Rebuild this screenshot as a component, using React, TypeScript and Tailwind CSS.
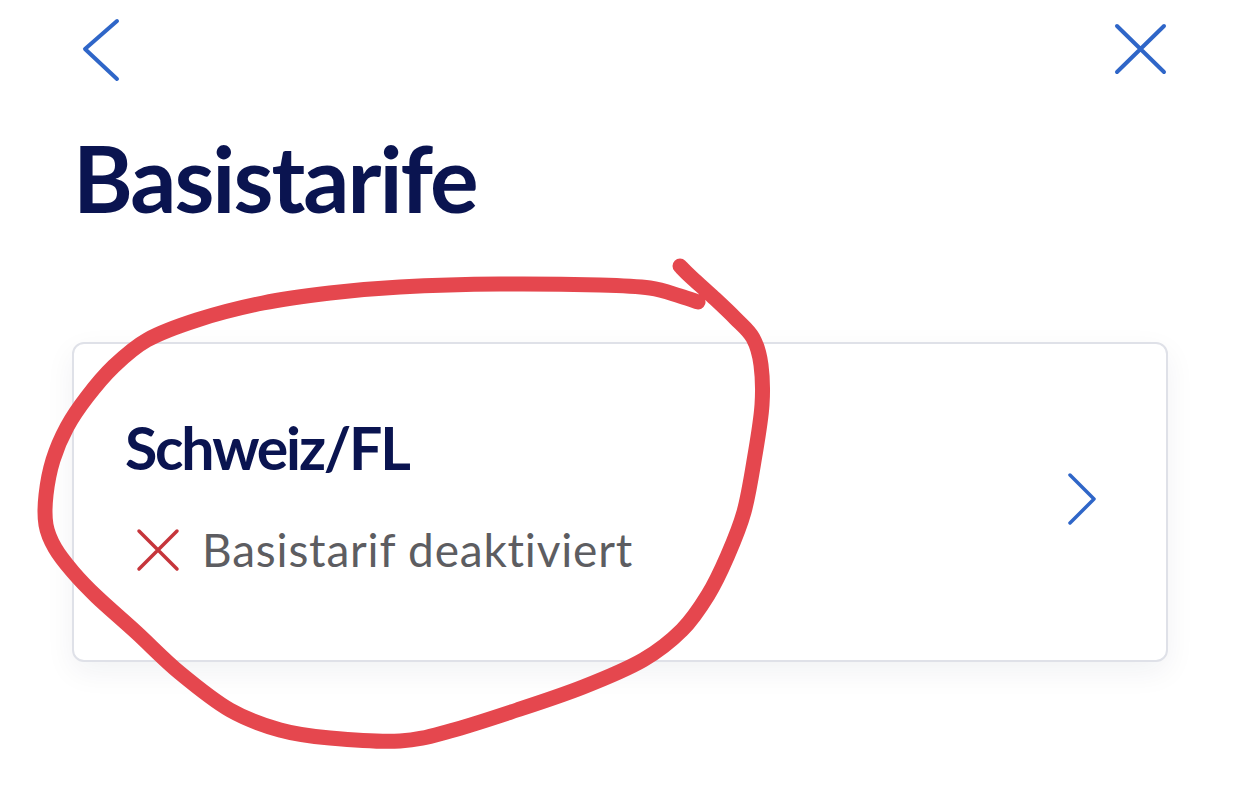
import React from "react";

const loopPts: [number, number][] = [
  [698, 302], [680, 296], [650, 288], [600, 285], [500, 284], [400, 287], [330, 293],
  [263, 303], [197, 320], [147, 340], [113, 367], [87, 397], [67, 427], [53, 460],
  [46, 495], [46, 525], [55, 548], [73, 572], [97, 597], [137, 633], [180, 673],
  [230, 710], [280, 730], [330, 738], [400, 741], [450, 731], [517, 710], [583, 687],
  [643, 660], [682, 630], [708, 595], [727, 557], [744, 512], [755, 455], [762, 405],
  [761, 365], [753, 338], [735, 318], [712, 296], [690, 276], [680, 266],
];

function smoothPath(pts: [number, number][]) {
  let d = `M${pts[0][0]},${pts[0][1]}`;
  for (let i = 0; i < pts.length - 1; i++) {
    const p0 = pts[i - 1] || pts[i];
    const p1 = pts[i];
    const p2 = pts[i + 1];
    const p3 = pts[i + 2] || p2;
    const c1x = p1[0] + (p2[0] - p0[0]) / 6;
    const c1y = p1[1] + (p2[1] - p0[1]) / 6;
    const c2x = p2[0] - (p3[0] - p1[0]) / 6;
    const c2y = p2[1] - (p3[1] - p1[1]) / 6;
    d += ` C${c1x.toFixed(1)},${c1y.toFixed(1)} ${c2x.toFixed(1)},${c2y.toFixed(1)} ${p2[0]},${p2[1]}`;
  }
  return d;
}

const loopD = smoothPath(loopPts);

export default function App() {
  return (
    <div
      className="relative w-[1241px] h-[799px] bg-white overflow-hidden"
      style={{ fontFamily: "Lato, 'Open Sans', sans-serif" }}
    >
      {/* header */}
      <div className="flex items-start justify-between pl-[81px] pr-[73px] pt-[17px]">
        <svg width="40" height="66" viewBox="0 0 40 66" fill="none">
          <path d="M36 4 L4 32 L36 62" stroke="#2f66c8" strokeWidth="4" strokeLinecap="round" strokeLinejoin="round" />
        </svg>
        <svg width="55" height="54" viewBox="0 0 55 54" fill="none" className="mt-[5px]">
          <path d="M4 4 L51 50 M51 4 L4 50" stroke="#2f66c8" strokeWidth="4" strokeLinecap="round" />
        </svg>
      </div>

      {/* title */}
      <h1 className="mt-[49px] pl-[73px] text-[91px] leading-none font-bold tracking-[-2px] text-[#0a1450]">
        Basistarife
      </h1>

      {/* card */}
      <div className="mt-[119px] ml-[72px] mr-[73px] h-[320px] rounded-[12px] border-2 border-[#dfe1e8] bg-white shadow-[0_10px_30px_rgba(20,30,60,0.06)] flex items-start pl-[51px] pr-[68px] pt-[72px]">
        <div className="flex-1 flex flex-col">
          <div className="mt-[2px] text-[59px] leading-none font-bold tracking-[-2.2px] text-[#0a1450]">
            Schweiz/FL
          </div>
          <div className="mt-[50px] flex items-center">
            <svg width="44" height="44" viewBox="0 0 44 44" fill="none" className="ml-[11px]">
              <path d="M3 3 L41 41 M41 3 L3 41" stroke="#c6353b" strokeWidth="3.5" strokeLinecap="round" />
            </svg>
            <span className="ml-[22px] text-[46px] leading-none text-[#5d5d61] tracking-[0.8px]">
              Basistarif deaktiviert
            </span>
          </div>
        </div>
        <svg width="32" height="56" viewBox="0 0 32 56" fill="none" className="mt-[55px]">
          <path d="M4 4 L28 28 L4 52" stroke="#2f66c8" strokeWidth="3.5" strokeLinecap="round" strokeLinejoin="round" />
        </svg>
      </div>

      {/* hand-drawn annotation */}
      <svg
        className="absolute inset-0 pointer-events-none"
        width="1241"
        height="799"
        viewBox="0 0 1241 799"
        fill="none"
      >
        <path d={loopD} stroke="#e5474e" strokeWidth="15" strokeLinecap="round" strokeLinejoin="round" />
      </svg>
    </div>
  );
}
